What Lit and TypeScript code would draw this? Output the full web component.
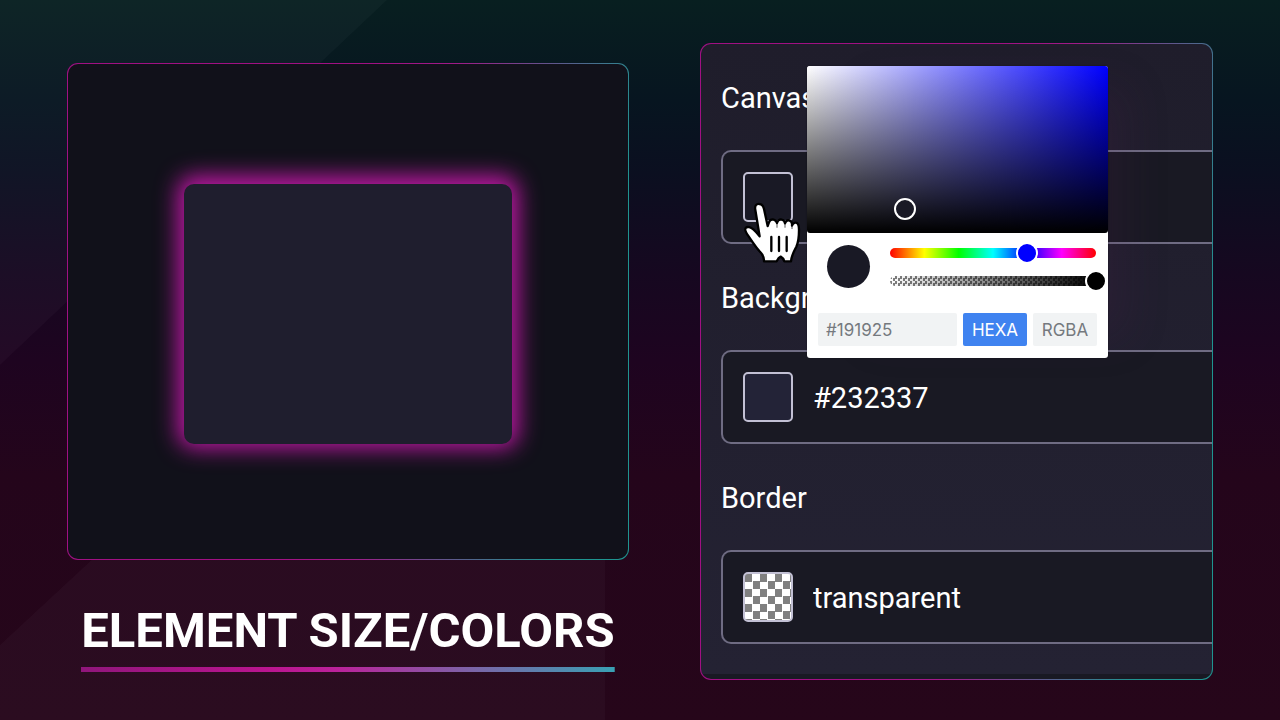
import { LitElement, html, css, svg } from "lit";
import { customElement, property } from "lit/decorators.js";

@customElement("color-field")
class ColorField extends LitElement {
  @property() label = "";
  @property() value = "";

  static styles = css`
    :host {
      display: block;
    }
    .label {
      display: block;
      padding: 34px 0 32px;
      font-size: 29px;
      line-height: 40px;
      color: #fff;
    }
    .field {
      display: flex;
      align-items: center;
      gap: 20px;
      padding: 20px 0 20px 20px;
      background: #191923;
      border: 2px solid #6f6c83;
      border-right: 0;
      border-radius: 10px 0 0 10px;
    }
    .swatch {
      flex: none;
      box-sizing: border-box;
      width: 50px;
      height: 50px;
      padding: 0;
      border: 2px solid #c2c0d4;
      border-radius: 5px;
      background: var(--swatch);
    }
    .swatch.checker {
      background: conic-gradient(#fff 25%, #808080 0 50%, #fff 0 75%, #808080 0) 0 0 / 15px 15px;
    }
    .value {
      flex: 1;
      min-width: 0;
      height: 50px;
      box-sizing: border-box;
      padding: 2px 0 0;
      border: 0;
      outline: 0;
      background: none;
      color: #fff;
      font: inherit;
      font-size: 29px;
    }
  `;

  render() {
    const clear = this.value === "transparent";
    return html`
      <label class="label" for="value">${this.label}</label>
      <div class="field">
        <button
          class="swatch ${clear ? "checker" : ""}"
          style="--swatch:${this.value}"
          aria-label="Pick ${this.label} color"
        ></button>
        <input class="value" id="value" type="text" .value=${this.value} spellcheck="false" />
      </div>
    `;
  }
}

@customElement("color-picker")
class ColorPicker extends LitElement {
  static styles = css`
    :host {
      display: block;
      overflow: hidden;
      border-radius: 3px;
      background: #fff;
      font-family: Inter, "Liberation Sans", sans-serif;
    }
    .palette {
      position: relative;
      height: 167px;
      border-radius: 0 0 3px 3px;
      background: linear-gradient(to top, #000, transparent), linear-gradient(to right, #fff, #00f);
    }
    .knob {
      position: absolute;
      left: 32.5%;
      top: 85.5%;
      box-sizing: border-box;
      width: 22px;
      height: 22px;
      border: 2px solid #fff;
      border-radius: 50%;
      background: #191925;
      transform: translate(-50%, -50%);
    }
    .controls {
      display: flex;
      align-items: center;
      gap: 20px;
      padding: 12px 12px 0 20px;
    }
    .current {
      flex: none;
      width: 43px;
      height: 43px;
      border-radius: 50%;
      background: #191925;
    }
    .tracks {
      flex: 1;
      display: grid;
      gap: 18px;
    }
    .track {
      display: flex;
      height: 10px;
      border-radius: 5px;
    }
    .hue {
      background: linear-gradient(to right, #f00, #ff0, #0f0, #0ff, #00f, #f0f, #f00);
    }
    .alpha {
      background: linear-gradient(to right, transparent, #000),
        conic-gradient(#fff 25%, #808080 0 50%, #fff 0 75%, #808080 0) 0 0 / 5px 5px;
    }
    .range {
      -webkit-appearance: none;
      appearance: none;
      flex: 1;
      min-width: 0;
      height: 10px;
      margin: 0 -11px;
      background: none;
      outline: 0;
    }
    .range::-webkit-slider-runnable-track {
      height: 10px;
    }
    .range::-webkit-slider-thumb {
      -webkit-appearance: none;
      box-sizing: border-box;
      width: 22px;
      height: 22px;
      margin-top: -6px;
      border: 2px solid #fff;
      border-radius: 50%;
      background: var(--thumb);
    }
    .hue .range {
      --thumb: #00f;
    }
    .alpha .range {
      --thumb: #000;
    }
    .formats {
      display: flex;
      gap: 6px;
      padding: 25px 11px 12px;
    }
    .hex,
    .format {
      box-sizing: border-box;
      height: 33px;
      padding: 0 8px;
      border: 0;
      border-radius: 2px;
      background: #f1f3f4;
      color: #75797e;
      font: inherit;
      font-size: 17px;
      outline: 0;
    }
    .hex {
      flex: 1;
      min-width: 0;
    }
    .format {
      width: 64px;
      text-align: center;
    }
    .format.active {
      background: #3f83f0;
      color: #fff;
    }
  `;

  render() {
    return html`
      <div class="palette"><div class="knob"></div></div>
      <div class="controls">
        <div class="current"></div>
        <div class="tracks">
          <div class="track hue">
            <input class="range" type="range" min="0" max="360" value="240" aria-label="Hue" />
          </div>
          <div class="track alpha">
            <input class="range" type="range" min="0" max="100" value="100" aria-label="Opacity" />
          </div>
        </div>
      </div>
      <div class="formats">
        <input class="hex" type="text" value="#191925" aria-label="Color value" spellcheck="false" />
        <button class="format active">HEXA</button>
        <button class="format">RGBA</button>
      </div>
    `;
  }
}

const hand = svg`
  <g stroke="#000" stroke-width="7" stroke-linejoin="round" stroke-linecap="round">
    <path fill="#fff" d="M137 210C134 196 141 191 149 192C157 192 161 198 163 207L174 258
      L178 247C180 240 186 237 192 239C198 241 201 245 202 249C204 241 210 237 216 239
      C222 240 225 244 226 250C229 242 234 239 240 242C246 244 248 249 247 257
      C250 249 257 246 262 249C268 253 268 261 268 270C268 290 267 305 260 320
      C253 334 246 344 244 364L224 364C222 358 217 352 213 350C208 352 204 358 201 364
      L163 364C164 352 160 344 149 333C136 318 126 302 117 289C109 278 104 269 108 264
      C113 258 124 262 131 268C139 275 145 282 150 289Z"/>
    <path fill="none" stroke-width="2" d="M202 250V262M226 251V262M247 258V266"/>
    <path fill="none" d="M185 291V333M208 291V333M231 291V333"/>
  </g>`;

@customElement("app-root")
class AppRoot extends LitElement {
  static styles = css`
    :host {
      display: block;
      font-family: Roboto, "Noto Sans", sans-serif;
    }
    .page {
      position: relative;
      isolation: isolate;
      box-sizing: border-box;
      display: grid;
      grid-template-columns: 562fr 513fr;
      gap: 71px;
      min-height: 100vh;
      padding: 43px 67px 40px;
      overflow: hidden;
      background: linear-gradient(#081f20 0%, #071520 14%, #0b0f20 24%, #160820 38%, #1e0420 50%, #24051b 66%, #26061a 100%);
    }
    .rays {
      position: absolute;
      inset: 0;
      z-index: -1;
      width: 100%;
      height: 100%;
    }
    .frame {
      border: 1px solid transparent;
      border-radius: 11px;
      background: var(--fill) padding-box,
        linear-gradient(102deg, #a01083, #a01083 45%, #a01a88 58%, #1f9490 88%) border-box;
    }
    .demo {
      display: flex;
      flex-direction: column;
      align-items: center;
      padding: 20px 0 8px;
    }
    .canvas {
      --fill: linear-gradient(#11111a, #11111a);
      box-sizing: border-box;
      flex: 1;
      align-self: stretch;
      display: grid;
      place-items: center;
      padding-top: 4px;
    }
    .element {
      width: 328px;
      height: 260px;
      border-radius: 10px;
      background: #1f1e2e;
      box-shadow: 0 -2px 22px 6px #c018a6;
    }
    .title {
      margin: 42px 0 0;
      padding-bottom: 12px;
      font-size: 49px;
      font-weight: 700;
      line-height: 58px;
      color: #fff;
      background: linear-gradient(to right, #90167b, #ba158f 35%, #bb229a 48%, #7a66a8 74%, #39a1b4) bottom / 100% 5px
        no-repeat;
    }
    .settings {
      --fill: linear-gradient(#1f1d2b, #242233 630px, #191923 630px);
      position: relative;
      box-sizing: border-box;
      padding: 0 0 35px 20px;
    }
    .picker {
      position: absolute;
      left: 106px;
      top: 22px;
      width: 301px;
      box-shadow: 0 0 2px #0006, 40px 0 40px -20px #50205028;
    }
    .hand {
      position: absolute;
      left: 42px;
      top: 158px;
      width: 58px;
      height: 62px;
    }
  `;

  render() {
    return html`
      <main class="page">
        <svg class="rays" viewBox="0 0 1280 720" preserveAspectRatio="none" aria-hidden="true">
          <path fill="#fff" fill-opacity=".026" d="M0 0H387L0 365ZM0 645L97 555H605V720H0Z" />
        </svg>
        <section class="demo">
          <div class="canvas frame"><div class="element"></div></div>
          <h1 class="title">ELEMENT SIZE/COLORS</h1>
        </section>
        <section class="settings frame">
          <color-field label="Canvas" value="#191925"></color-field>
          <color-field label="Background" value="#232337"></color-field>
          <color-field label="Border" value="transparent"></color-field>
          <color-picker class="picker"></color-picker>
          <svg class="hand" viewBox="100 186 174 186" aria-hidden="true">${hand}</svg>
        </section>
      </main>
    `;
  }
}
